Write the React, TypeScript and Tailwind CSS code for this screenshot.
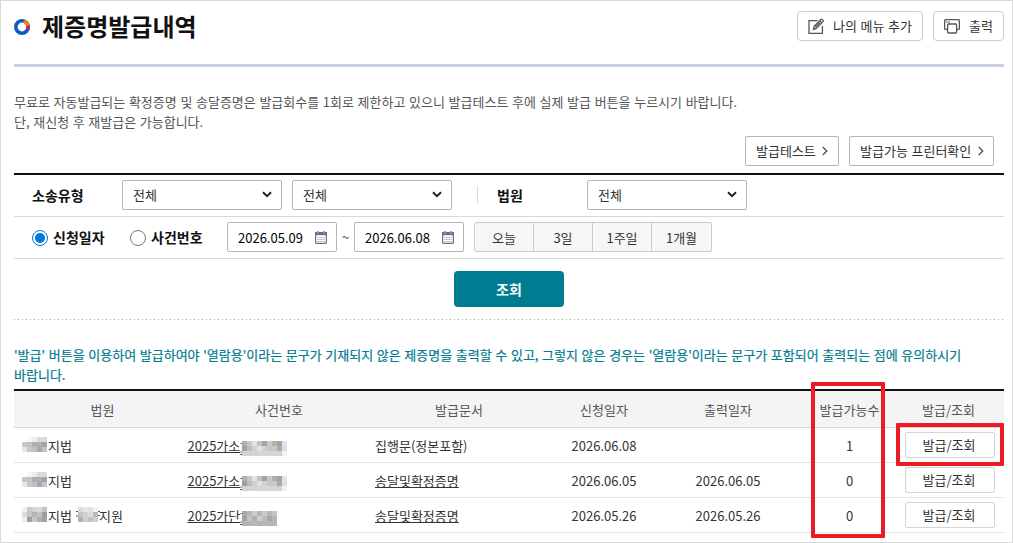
import clsx from "clsx";
import type { ReactNode } from "react";

const COLS = "grid grid-cols-[177px_176px_184px_106px_142px_101px_104px]";

const COURT_A = [
  ["", "#f8f5f3", "#ececee", "#dcdcdd", "#dadadb"],
  ["#c7c7c9", "#cdc1b9", "#a4b2c0", "#b3adad", "#a0a3a6"],
  ["#e7e7e5", "#d0c5be", "#b8c3d0", "#a9a8a9", "#c4c5c7"],
];

const COURT_B = [
  ["#f2f1ee", "#c9cace", "#d3d3d1", "#d9d9d6", "#c2c4c9"],
  ["#dcdcdd", "#c6c6c8", "#b3b3b6", "#c4c2c4", "#9c9ca4"],
  ["#f6ede4", "#9f9fa6", "#c8c8cb", "#b0b0b0", "#a2a2a9"],
];

const BRANCH = [
  ["#dcdcdd", "#e7e8ea", "#e4e2df", "#f2f2f3"],
  ["#c4c4c6", "#d0d0d2", "#dedad5", "#b9b9bd"],
  ["#b3b3b5", "#d6cfc9", "#c3c3c7", "#cfcfd0"],
];

const CASE_A = [
  ["#adafb3", "#d2c4bb", "#dbe5ee", "#c0c3c8", "#a8a29e", "#c6c8ca", "#b3b0ac", "#aba199", "#dbe4f0"],
  ["#a09fa1", "#bdbcbf", "#c6d2de", "#dce4ea", "#d9cfc7", "#c9c5c1", "#c5c9d6", "#b4a79f", "#d8e0ee"],
  ["#d2d2d2", "#d3d3d3", "#d4d4d4", "#d5d5d5", "#d5d5d5", "#d5d5d5", "#d6d6d6", "#d3d3d3", "#f2f2f3"],
];

const CASE_B = [
  ["#a9a9ab", "#b9b9bd", "#cccdd0", "#b5b5b9", "#d6cabf", "#b7b7bd", "#c3c3c5"],
  ["#a2a2a4", "#c4c4c8", "#b0b0b5", "#cdcdd0", "#c1bbb6", "#a5a5ad", "#b5b5b7"],
  ["#b3b3b3", "#b5b5b5", "#b7b7b7", "#b4b4b4", "#b6b6b6", "#b5b5b5", "#b8b8b8"],
];

const rows = [
  { court: COURT_A, branch: false, prefix: "2025가소", mask: CASE_A, doc: "집행문(정본포함)", link: false, applied: "2026.06.08", printed: "", count: 1 },
  { court: COURT_A, branch: false, prefix: "2025가소", mask: CASE_A, doc: "송달및확정증명", link: true, applied: "2026.06.05", printed: "2026.06.05", count: 0 },
  { court: COURT_B, branch: true, prefix: "2025가단", mask: CASE_B, doc: "송달및확정증명", link: true, applied: "2026.05.26", printed: "2026.05.26", count: 0 },
];

function Mosaic({ cells, className }: { cells: string[][]; className?: string }) {
  return (
    <span className={clsx("flex shrink-0 flex-col", className)} aria-hidden="true">
      {cells.map((line, y) => (
        <span key={y} className="flex">
          {line.map((color, x) => (
            <span key={x} className="size-[5px]" style={{ backgroundColor: color || undefined }} />
          ))}
        </span>
      ))}
    </span>
  );
}

// stray marks left visible at the edges of a mosaic
function Fringe({ d, className }: { d: string; className?: string }) {
  return (
    <svg width="2" height="14" viewBox="0 0 2 14" fill="none" stroke="#555" className={clsx("shrink-0", className)}>
      <path d={d} />
    </svg>
  );
}

function Logo() {
  return (
    <svg width="16" height="16" viewBox="0 0 16 16" fill="none" strokeWidth="3.6">
      <circle cx="8" cy="8" r="6.2" stroke="#0b5cc4" />
      <path d="M9.8 2.1A6.2 6.2 0 0 1 14.1 6.8" stroke="#f08300" />
      <path d="M14.1 6.8a6.2 6.2 0 0 1-.5 3.6" stroke="#d6147f" />
    </svg>
  );
}

function EditIcon() {
  return (
    <svg width="17" height="17" viewBox="0 0 17 17" fill="none" stroke="#555" strokeWidth="1.3">
      <path d="M9.5 2.6H1v12.7h13.4V8" />
      <path d="M5.4 11.4l.9-3.2 6.9-6.9c.5-.5 2.6 1.5 2.1 2.1l-7 7-2.9 1z" />
      <path d="M11.6 2.9l2.2 2.2M7.3 9.4l4.6-4.6" />
    </svg>
  );
}

function PrintIcon() {
  return (
    <svg width="16" height="15" viewBox="0 0 16 15" fill="none" stroke="#555" strokeWidth="1.3">
      <path d="M3.4 10.4H1.6a1 1 0 0 1-1-1V1.7a1 1 0 0 1 1-1h12.8a1 1 0 0 1 1 1v7.7a1 1 0 0 1-1 1h-1.7" />
      <path d="M2.2 3h1.2M4.4 3h1.2" />
      <rect x="3.6" y="5" width="9" height="9" rx="1" fill="#fff" />
    </svg>
  );
}

function CalendarIcon() {
  return (
    <svg width="12" height="13" viewBox="0 0 12 13" fill="none">
      <rect x="0.6" y="1.6" width="10.8" height="10.8" rx="1" stroke="#66728a" strokeWidth="1.2" />
      <path d="M0 1h12v3.2H0z" fill="#66728a" />
      <path d="M3 0v2.4M9 0v2.4" stroke="#66728a" strokeWidth="1.4" />
      <path d="M2.5 2h1M8.5 2h1" stroke="#fff" strokeWidth="0.8" />
      <path d="M2.5 6.5h7M2.5 8.5h7M2.5 10.5h7" stroke="#8a94a6" strokeWidth="1" strokeDasharray="1 1" />
    </svg>
  );
}

function Chevron() {
  return (
    <svg width="6" height="10" viewBox="0 0 6 10" fill="none" stroke="#444" strokeWidth="1.2">
      <path d="M0.8 1l4 4-4 4" />
    </svg>
  );
}

function LinkButton({ children, className }: { children: ReactNode; className: string }) {
  return (
    <button className={clsx("flex h-[30px] items-center gap-[6.5px] rounded-xs border border-[#b5b5b5] pl-2.5 whitespace-nowrap text-[#333] [word-spacing:inherit]", className)}>
      {children}
      <Chevron />
    </button>
  );
}

function Select() {
  return (
    <button className="flex h-[30px] w-[160px] items-center justify-between rounded-xs border border-[#b5b5b5] bg-white pr-[9px] pl-2.5 text-[#333]">
      <span>전체</span>
      <svg width="10" height="7" viewBox="0 0 10 7" fill="none" stroke="#222" strokeWidth="2">
        <path d="M1 1.2l4 4 4-4" />
      </svg>
    </button>
  );
}

function DateField({ value }: { value: string }) {
  return (
    <div className="flex h-[30px] w-[110px] items-center justify-between rounded-xs border border-[#b5b5b5] pr-[9px] pl-2.5 text-black">
      <span className="pt-px">{value}</span>
      <CalendarIcon />
    </div>
  );
}

function Radio({ label, checked }: { label: string; checked?: boolean }) {
  return (
    <label className="flex items-center gap-[5px] text-[14px] font-bold text-[#111]">
      <span className={clsx("mt-px flex size-4 items-center justify-center rounded-full border", checked ? "border-[#0078d7]" : "border-[#777]")}>
        {checked && <span className="size-2.5 rounded-full bg-[#0078d7]" />}
      </span>
      {label}
    </label>
  );
}

export default function App() {
  return (
    <div className="relative h-[543px] w-[1013px] overflow-hidden border border-[#d9d9d9] bg-white px-[13px] font-['Noto_Sans_CJK_KR',sans-serif] text-[13px] leading-5 text-[#333] [word-spacing:0.72px]">
      <header className="flex h-[66px] w-[990px] items-start border-b-3 border-[#c8d1df] pt-2.5">
        <div className="flex h-8 items-center gap-3">
          <Logo />
          <h1 className="-mt-0.5 text-[24px] leading-8 font-bold text-[#111]">제증명발급내역</h1>
        </div>
        <div className="ml-auto flex gap-2.5">
          <button className="flex h-[30px] w-[126px] items-center gap-2 rounded-[4px] border border-[#ccc] pl-2.5 whitespace-nowrap [word-spacing:inherit]">
            <EditIcon />
            나의 메뉴 추가
          </button>
          <button className="flex h-[30px] w-[71px] items-center gap-[9px] rounded-[4px] border border-[#ccc] pl-2.5 whitespace-nowrap">
            <PrintIcon />
            출력
          </button>
        </div>
      </header>

      <p className="mt-[25px] text-[#555]">
        무료로 자동발급되는 확정증명 및 송달증명은 발급회수를 1회로 제한하고 있으니 발급테스트 후에 실제 발급 버튼을 누르시기 바랍니다.
        <br />
        단, 재신청 후 재발급은 가능합니다.
      </p>

      <div className="mt-1 flex w-[980px] justify-end gap-2.5">
        <LinkButton className="w-[94px]">발급테스트</LinkButton>
        <LinkButton className="w-[145px]">발급가능 프린터확인</LinkButton>
      </div>

      <section className="mt-[7px] w-[990px] border-t-2 border-[#111]">
        <div className="flex h-[42px] items-center border-b border-[#d9d9d9] pb-0.5 pl-[18px]">
          <span className="w-[90px] text-[14px] font-bold text-[#111]">소송유형</span>
          <Select />
          <span className="w-2.5" />
          <Select />
          <span className="ml-[25px] h-[18px] w-px bg-[#d9d9d9]" />
          <span className="ml-[19px] w-[90px] text-[14px] font-bold text-[#111]">법원</span>
          <Select />
        </div>
        <div className="flex h-[42px] items-center border-b border-[#d9d9d9] pb-px pl-[18px]">
          <div className="w-[98px]">
            <Radio label="신청일자" checked />
          </div>
          <div className="w-[97px]">
            <Radio label="사건번호" />
          </div>
          <DateField value="2026.05.09" />
          <span className="w-[17px] text-center text-[#555]">~</span>
          <DateField value="2026.06.08" />
          <div className="ml-2.5 flex h-[30px] w-[238px] divide-x divide-[#ccc] overflow-hidden rounded-xs border border-[#ccc] bg-[#f6f6f6]">
            {["오늘", "3일", "1주일", "1개월"].map((label) => (
              <button key={label} className="w-[59px] shrink-0 pt-px">
                {label}
              </button>
            ))}
          </div>
        </div>
        <div className="flex h-[60px] justify-center pt-3">
          <button className="h-9 w-[110px] rounded-[4px] bg-[#007c92] pb-px text-[14px] font-bold text-white">조회</button>
        </div>
        <svg width="990" height="1" className="block">
          <path d="M0 0.5h990" stroke="#aaa" strokeDasharray="1 3" />
        </svg>
      </section>

      <p className="mt-[25px] w-[970px] text-[#007c8f] [-webkit-text-stroke:0.2px]">
        '발급' 버튼을 이용하여 발급하여야 '열람용'이라는 문구가 기재되지 않은 제증명을 출력할 수 있고, 그렇지 않은 경우는 '열람용'이라는 문구가 포함되어 출력되는 점에 유의하시기
        <br />
        바랍니다.
      </p>

      <div className="mt-1 w-[990px] border-t-2 border-[#111]">
        <div className={clsx(COLS, "h-[37px] items-center border-b border-[#d6d6d6] bg-[#f4f4f4] pt-px text-center text-[#555]")}>
          {["법원", "사건번호", "발급문서", "신청일자", "출력일자", "발급가능수"].map((label) => (
            <span key={label}>{label}</span>
          ))}
          <span className="pr-[7px]">발급/조회</span>
        </div>
        {rows.map((row) => (
          <div key={row.applied} className={clsx(COLS, "h-[35px] items-center border-b border-[#e5e5e5]")}>
            <div className="flex items-center pl-2">
              <Mosaic cells={row.court} className="-mt-px mr-px" />
              <span className="pt-px">지법</span>
              {row.branch && (
                <>
                  <Fringe d="M0 3.5h2M0 8h2" className="ml-[4px]" />
                  <Mosaic cells={BRANCH} className="-mt-px" />
                  <Fringe d="M0 3.5h2M0 7.5h2" />
                  <span className="-ml-px pt-px">지원</span>
                </>
              )}
            </div>
            <div className="-ml-[3.5px] flex items-center">
              <span className="pt-px underline">{row.prefix}</span>
              <Fringe d="M0.5 2.5h1.5M0.5 11h1.5M0 13.5h2" className="mt-[5px]" />
              <Mosaic cells={row.mask} className="mt-[7px]" />
            </div>
            <div className="pt-px pl-2">
              <span className={clsx(row.link && "underline")}>{row.doc}</span>
            </div>
            <div className="pt-px text-center">{row.applied}</div>
            <div className="pt-px text-center">{row.printed}</div>
            <div className="pt-px text-center">{row.count}</div>
            <div className="flex pl-[5px]">
              <button className="h-[26px] w-[90px] rounded-xs border border-[#d5d5d5] bg-white pr-0.5 pb-px">발급/조회</button>
            </div>
          </div>
        ))}
      </div>

      {/* highlight frames over the count column and the first action button */}
      <div className="absolute top-[381px] left-[810px] h-[156px] w-[74px] rounded-[1px] border-4 border-[#ed1c24]" />
      <div className="absolute top-[422px] left-[895px] h-[43px] w-[108px] rounded-[1px] border-4 border-[#ed1c24]" />
    </div>
  );
}
